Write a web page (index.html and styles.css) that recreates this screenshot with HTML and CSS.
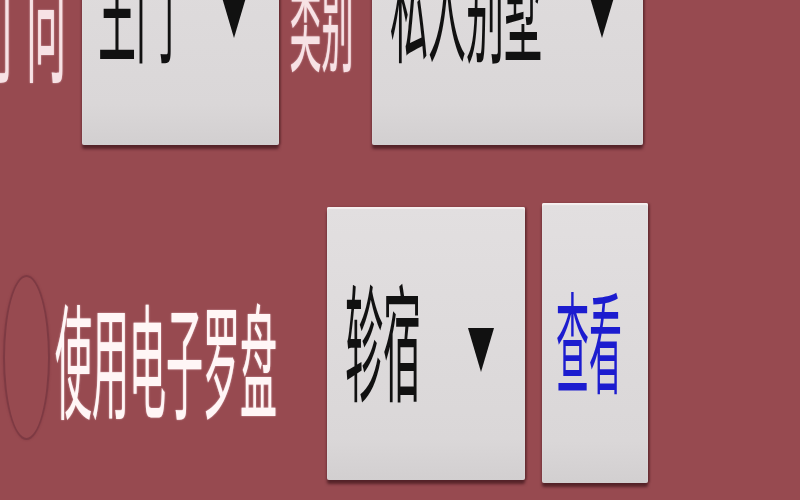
FILE: index.html
```html
<!DOCTYPE html>
<html lang="zh">
<head>
<meta charset="utf-8">
<title>罗盘设置</title>
<link rel="stylesheet" href="styles.css">
</head>
<body>
<div class="screen">
  <div class="row row-top">
    <div class="label label-door"><span class="txt">门向</span></div>
    <div class="box box-door">
      <span class="txt val">主门</span>
      <svg class="tri" viewBox="0 0 26 44" width="26" height="44"><polygon points="0,0 26,0 13,44"/></svg>
    </div>
    <div class="label label-type"><span class="txt">类别</span></div>
    <div class="box box-type">
      <span class="txt val">私人别墅</span>
      <svg class="tri" viewBox="0 0 26 44" width="26" height="44"><polygon points="0,0 26,0 13,44"/></svg>
    </div>
  </div>
  <div class="row row-bottom">
    <span class="radio"></span>
    <div class="label label-compass"><span class="txt">使用电子罗盘</span></div>
    <div class="box box-star">
      <span class="txt val">轸宿</span>
      <svg class="tri" viewBox="0 0 26 44" width="26" height="44"><polygon points="0,0 26,0 13,44"/></svg>
    </div>
    <div class="box box-view"><span class="txt link">查看</span></div>
  </div>
</div>
</body>
</html>
```
FILE: styles.css
```css
html, body {
  margin: 0;
  padding: 0;
}
body {
  background: #974a50;
  width: 800px;
  height: 500px;
  overflow: hidden;
  font-family: "Noto Sans CJK SC", "Noto Sans", sans-serif;
}
.screen {
  display: flex;
  flex-direction: column;
}
.row {
  display: flex;
  align-items: center;
  flex-shrink: 0;
}
.row-top {
  height: 273px;
  margin-top: -128px;
}
.row-bottom {
  height: 280px;
  margin-top: 58px;
}
.txt {
  display: inline-block;
  line-height: 1;
  white-space: nowrap;
  transform: scaleY(3.35);
  transform-origin: 50% 55%;
}
.label {
  display: flex;
  align-items: center;
  color: #f7e2e5;
  flex-shrink: 0;
}
.label .txt {
  text-shadow: 0 0 1px rgba(255, 230, 235, 0.7);
}
.label-door {
  width: 82px;
  justify-content: flex-end;
  padding-right: 2px;
  box-sizing: border-box;
  font-size: 40px;
  letter-spacing: 14px;
  margin-top: 22px;
}
.label-type {
  width: 93px;
  justify-content: center;
  padding-right: 8px;
  box-sizing: border-box;
  font-size: 32px;
  margin-top: 22px;
}
.label-compass {
  margin-left: 5px;
  width: 222px;
  font-size: 37px;
  color: #fff6f6;
  margin-top: 36px;
}
.radio {
  flex-shrink: 0;
  width: 43px;
  height: 161px;
  margin-left: 3px;
  margin-top: 28px;
  border: 2px solid #7d3a43;
  border-radius: 50%;
  box-shadow: 0 0 2px rgba(120, 50, 60, 0.6);
}
.box {
  flex-shrink: 0;
  display: flex;
  align-items: center;
  box-sizing: border-box;
  background: linear-gradient(#e2dfe0, #dad7d8 85%, #d2cfd0);
  border-radius: 2px;
  box-shadow:
    inset 0 2px 1px #f6f0f0,
    0 4px 3px rgba(60, 20, 26, 0.7),
    2px 0 2px rgba(60, 20, 26, 0.35);
}
.box-door {
  width: 197px;
  height: 273px;
  padding-left: 16px;
}
.box-type {
  width: 271px;
  height: 273px;
  padding-left: 18px;
}
.box-star {
  width: 198px;
  height: 273px;
  padding-left: 18px;
  margin-left: 50px;
}
.box-view {
  width: 106px;
  height: 280px;
  padding-left: 14px;
  margin-left: 17px;
}
.val {
  font-size: 38px;
  color: #111111;
}
.row-top .val {
  margin-top: -10px;
}
.link {
  font-size: 33px;
  color: #1c1ccf;
}
.tri {
  flex-shrink: 0;
  margin-left: 47px;
  margin-top: 14px;
  fill: #111111;
}
```
